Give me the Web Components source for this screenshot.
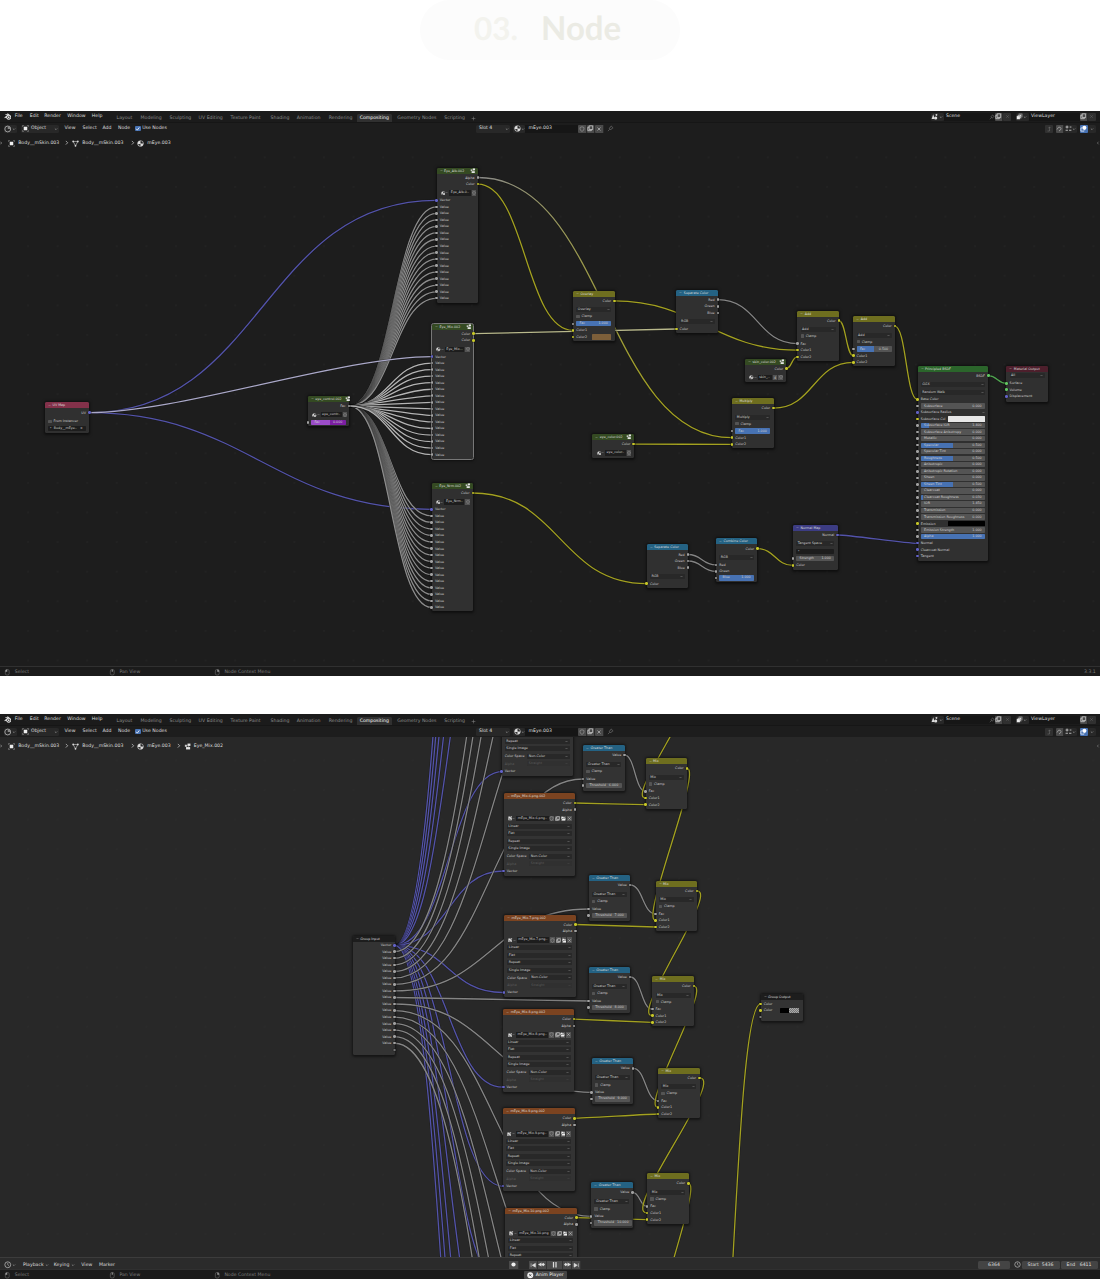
<!DOCTYPE html>
<html lang="en">
<head>
<meta charset="utf-8">
<title>03. Node</title>
<style>
html,body{margin:0;padding:0;background:#fff}
body{font-family:"DejaVu Sans",sans-serif;text-rendering:geometricPrecision;width:1100px;height:1279px;overflow:hidden}
</style>
</head>
<body>
<node-page></node-page>
<script>
const define = (name, css, render) => customElements.define(name, class extends HTMLElement {
  constructor(){ super(); this.attachShadow({mode:'open'}); }
  connectedCallback(){ this.shadowRoot.innerHTML = `<style>*{box-sizing:border-box}${css}</style>` + render(this); }
});

/* ---------- icons ---------- */
const ICONS = {
  blender:'<path d="M.6 7 5.200 3H2.200V2H6L5 1 6 .4 11 4.300Q12.800 6.200 11.400 8.600 9.800 10.800 7.300 10.800 4.500 10.600 3.600 8V7L1.400 8.400Z" fill="#e2e2e2"/><circle cx="7.600" cy="6.700" r="2.300" fill="#1d1d1d"/><circle cx="7.600" cy="6.700" r="1.400" fill="#e2e2e2"/>',
  editor:'<circle cx="5.600" cy="6" r="4.400" fill="none" stroke="#bbb" stroke-width="1.200"/><path d="M5.600 1.600A4.400 4.400 0 0 1 10 6L5.600 6Z" fill="#888"/>',
  object:'<rect x="3" y="3" width="6" height="6" fill="#eee"/><path d="M1 3V1H3M9 1H11V3M11 9V11H9M3 11H1V9" fill="none" stroke="#aaa"/>',
  mesh:'<path d="M2 2.500H10L6 10Z" fill="none" stroke="#ccc" stroke-width="1.100"/><circle cx="2" cy="2.500" r="1.500" fill="#ddd"/><circle cx="10" cy="2.500" r="1.500" fill="#ddd"/><circle cx="6" cy="10" r="1.500" fill="#ddd"/>',
  ball:'<circle cx="6" cy="6" r="4.900" fill="#ddd"/><path d="M6 1.100A4.900 4.900 0 0 1 10.900 6L6 6Z" fill="#222"/><path d="M1.500 7A4.900 4.900 0 0 0 6 10.900V7Z" fill="#333"/><circle cx="6" cy="6" r="4.900" fill="none" stroke="#ddd" stroke-width=".8"/>',
  tree:'<rect x="6" y="1" width="5" height="4" fill="#e5e5e5"/><rect x="1.500" y="3" width="3.500" height="3.500" fill="#ccc"/><rect x="3.500" y="7" width="7" height="4" fill="#e5e5e5"/><path d="M8 5V7M5 5H6" stroke="#ccc"/>',
  image:'<path d="M2 1H7V4H10V11H1V1Z" fill="#ddd"/><path d="M2.500 9 4.500 6 6 8 7 7 8.500 9Z" fill="#333"/><rect x="8" y="1" width="3" height="2" fill="#ddd"/>',
  shield:'<path d="M2 3 6 1.500 10 3V6Q10 9 6 10.800 2 9 2 6Z" fill="none" stroke="#aaa" stroke-width="1.100"/>',
  copy:'<path d="M4 1.500H10.500V8.500H4Z" fill="none" stroke="#ddd" stroke-width="1.300"/><path d="M4 4H1.500V10.500H8V8.500" fill="none" stroke="#ddd" stroke-width="1.300"/>',
  folder:'<path d="M1 2H5L6 3.500H10V5H3L1 9.500ZM3.500 5.800H11.500L9.500 10.500H1.500Z" fill="#eee"/>',
  close:'<path d="M3 3 9 9M9 3 3 9" stroke="#ccc" stroke-width="1.200"/>',
  closedim:'<path d="M3 3 9 9M9 3 3 9" stroke="#666" stroke-width="1.200"/>',
  pin:'<path d="M7 1.500 10.500 5 8 6 6.500 8.500 3.500 5.500 6 4ZM5 7 1.500 10.500" fill="none" stroke="#777" stroke-width="1"/>',
  scene:'<path d="M1 9.500 3.500 2 6 9.500Z" fill="#ddd"/><circle cx="7.500" cy="8" r="2.500" fill="#ddd"/><path d="M7 2 10 1V4L8 5Z" fill="#ccc"/>',
  layer:'<rect x="4.500" y="1" width="6.500" height="6.500" fill="#999"/><rect x="2.500" y="3" width="6.500" height="6.500" fill="#ddd" stroke="#222" stroke-width=".6"/><rect x="1" y="5" width="6" height="6" fill="#eee" stroke="#222" stroke-width=".6"/>',
  up:'<path d="M3 10H7V2M4.500 4 7 2 9 4" fill="none" stroke="#777"/>',
  magnet:'<path d="M2 7 5 2.500Q9 1 10 5 10 8 6 10" fill="none" stroke="#aaa" stroke-width="1.600"/>',
  snap:'<path d="M1 3.500H6M3.500 1V6M8 3.500H11M1 9H5M7 9H11" stroke="#ccc" stroke-width="1.500"/>',
  overlay:'<circle cx="7.500" cy="4.800" r="3.600" fill="#fff"/><path d="M3.500 5H1.500V10.500H7V9.500" fill="none" stroke="#fff" stroke-width="1.200"/>',
  mouseL:'<rect x="2.500" y="1" width="7" height="10" rx="2.500" fill="none" stroke="#777"/><path d="M2.500 5V3.500Q3 1 6 1V5Z" fill="#999"/>',
  mouseM:'<rect x="2.500" y="1" width="7" height="10" rx="2.500" fill="none" stroke="#777"/><rect x="5" y="1" width="2" height="4" fill="#999"/>',
  mouseR:'<rect x="2.500" y="1" width="7" height="10" rx="2.500" fill="none" stroke="#777"/><path d="M9.500 5V3.500Q9 1 6 1V5Z" fill="#999"/>',
  clock:'<circle cx="6" cy="6" r="4.700" fill="none" stroke="#bbb" stroke-width="1.200"/><path d="M6 3V6L8 7.500" fill="none" stroke="#bbb"/>',
  rec:'<circle cx="6" cy="6" r="3.600" fill="#eee"/>',
  first:'<path d="M2 2.500V9.500M10 2.500V9.500L4 6Z" fill="#ddd" stroke="#ddd" stroke-width="1"/>',
  prev:'<path d="M6 2.500V9.500L0 6ZM12 6 9 3 6 6 9 9Z" fill="#ddd"/>',
  next:'<path d="M6 2.500V9.500L12 6ZM0 6 3 3 6 6 3 9Z" fill="#ddd"/>',
  last:'<path d="M10 2.500V9.500M2 2.500V9.500L8 6Z" fill="#ddd" stroke="#ddd" stroke-width="1"/>',
  pause:'<path d="M4 1.500V10.500M8 1.500V10.500" stroke="#ddd" stroke-width="2"/>',
  stop:'<circle cx="6" cy="6" r="5.500" fill="#eee"/><path d="M4 4 8 8M8 4 4 8" stroke="#444" stroke-width="1.500"/>',
  down:'<path d="M2.500 4.500 6 8 9.500 4.500" fill="none" stroke="#bbb" stroke-width="1.500"/>',
  right:'<path d="M4 2 8 6 4 10" fill="none" stroke="#ccc" stroke-width="1.600"/>',
  left:'<path d="M8 2 4 6 8 10" fill="none" stroke="#aaa" stroke-width="1.400"/>',
  check:'<path d="M2.500 6 5 9 9.500 3" fill="none" stroke="#fff" stroke-width="1.700"/>',
  plus:'<path d="M6 1.500V10.500M1.500 6H10.500" stroke="#888" stroke-width="1.200"/>'
};
define('bl-icon', ':host{display:inline-flex;flex:none;width:var(--s,7px);height:var(--s,7px)}svg{width:100%;height:100%;display:block}',
  el => `<svg viewBox="0 0 12 12">${ICONS[el.getAttribute('name')] || ''}</svg>`);
const ic = (n, s=7, extra='') => `<bl-icon name="${n}" style="--s:${s}px;${extra}"></bl-icon>`;
/* a bar item: its width runs to the start of the next item */
const cell = (w, html, cls='') => {
  const text = /^[A-Z][^<]*$/.test(html) ? `<span class="tx">${html}</span>` : html;
  return `<span class="c ${cls}" style="width:${w}px">${text}</span>`;
};
const BAR = `:host{display:flex;align-items:center;font:4.65px/8px "DejaVu Sans",sans-serif;color:#dedede;white-space:nowrap;position:relative;z-index:2}
.c{display:inline-flex;align-items:center;flex:none;height:8px}.g{flex:1}.tx{padding-top:var(--drop,1.2px)}
.b{background:#282828;border-radius:1.500px}.k{background:#161616}.l{background:#4a4a4a;border-radius:1px;justify-content:center;border-right:.5px solid #2a2a2a}.d{background:#303030;border-radius:1px;justify-content:center}`;

define('bl-topbar', BAR + `:host{height:12px;background:#1b1b1b;border-bottom:1px solid #161616;padding-left:.3px;--drop:1px}
.tabs{display:flex;align-items:center;margin-top:3px;color:#8c8c8c;height:8px;--drop:1.500px}.on{background:#303030;color:#fff;border-radius:1.500px 1.500px 0 0;justify-content:center}`, () =>
  cell(3.5,'')+cell(11, ic('blender',7.5))+cell(15,'File')+cell(14.5,'Edit')+cell(23,'Render')+cell(24.5,'Window')+cell(24.8,'Help') +
  `<div class="tabs">${[['Layout',24],['Modeling',29],['Sculpting',29],['UV Editing',32],['Texture Paint',40],['Shading',26.2],['Animation',32],['Rendering',28]].map(t=>cell(t[1],t[0])).join('')}
  ${cell(35,'Compositing','on')}${cell(5.5,'')}${cell(47,'Geometry Nodes')}${cell(26.5,'Scripting')}${cell(8,ic('plus',5))}</div><span class="g"></span>` +
  cell(13, ic('scene',7.5)+ic('down',4), 'b')+cell(51,'<span class="tx" style="padding-left:2px">Scene</span><span class="g"></span>'+ic('pin',6),'k')+cell(8,ic('copy',6.5),'l')+cell(8,ic('closedim',5),'d')+cell(5,'')+
  cell(13, ic('layer',7)+ic('down',4), 'b')+cell(50.5,'<span class="tx" style="padding-left:2px">ViewLayer</span>','k')+cell(8,ic('copy',6.5),'l')+cell(8.5,ic('closedim',5),'d')+cell(4,''));

define('bl-header', BAR + ':host{height:11px;background:#1d1d1d;padding-left:4px;--drop:0px}.chk{width:5.500px;height:5.500px;background:#4772b3;border-radius:1px;margin-right:1.700px;display:flex}.bl{background:#4772b3;border-radius:1px;justify-content:center}', () =>
  cell(12.5, ic('editor',8)+ic('down',4),'b')+cell(4,'')+cell(38.5, ic('object',7,'margin:0 2.500px 0 1px')+'Object<span class="g"></span>'+ic('down',4,'margin-right:1px'),'b')+cell(5.5,'')+
  cell(18,'View')+cell(20,'Select')+cell(15.5,'Add')+cell(17,'Node')+`<span class="chk">${ic('check',5.5)}</span>`+cell(40,'Use Nodes')+
  cell(293.8,'')+cell(34.5,'<span style="padding-left:3px">Slot 4</span><span class="g"></span>'+ic('down',4,'margin-right:1px'),'b')+cell(2.5,'')+
  cell(12.5,ic('ball',7,'margin-left:1px')+ic('down',4),'b')+cell(52.6,'<span style="padding-left:3px">mEye.003</span>','k')+cell(8.5,ic('shield',6),'l')+cell(8.5,ic('copy',6.5),'l')+cell(8.5,ic('close',6),'l')+cell(3,'')+ic('pin',7)+
  '<span class="g"></span>'+cell(8,ic('up',6),'d')+cell(2.5,'')+cell(8.5,ic('magnet',6),'l')+cell(13,ic('snap',7,'margin-left:1px')+ic('down',4),'b')+cell(2.5,'')+cell(8.5,ic('overlay',7),'bl')+cell(8,ic('down',4,'margin-left:2px'),'b')+cell(4,''));

define('bl-crumbs', BAR + ':host{height:10px;margin-top:4px;--drop:1.600px}', el => {
  const t = s => `<span class="tx">${s}</span>`;
  return cell(8,ic('right',4,'margin-left:-1.500px'))+cell(10.2,ic('object',7))+cell(46.3,t('Body__mSkin.003'))+cell(7.5,ic('right',5.5))+cell(10.3,ic('mesh',7))+cell(47.700,t('Body__mSkin.003'))+cell(7.3,ic('right',5.5))+cell(10,ic('ball',7))+cell(29,t('mEye.003'))+
  (el.hasAttribute('group') ? cell(7.5,ic('right',5.5))+cell(10,ic('tree',7))+t('Eye_Mix.002') : '')+'<span class="g"></span>'+ic('left',4);
});

define('bl-status', BAR + `:host{height:10px;background:#1b1b1b;color:#7b7b7b;border-top:1px solid #303030;padding:1.500px 0 0 4px;--drop:1.600px}
.job{background:#444;color:#eee;border-radius:1px;gap:2px;justify-content:center}`, el =>
  cell(10.8,ic('mouseL',6.5))+cell(94.4,'Select')+cell(10.2,ic('mouseM',6.5))+cell(95,'Pan View')+cell(10,ic('mouseR',6.5))+cell(60,'Node Context Menu')+
  (el.hasAttribute('job') ? cell(239.6,'')+cell(43,ic('stop',6.5)+'<span class="tx">Anim Player</span>','job') : '<span class="g"></span>'+cell(16,'<span class="tx">3.3.1</span>')));

define('bl-timeline', BAR + ':host{height:12px;background:#2b2b2b;border-top:1px solid #3c3c3c;padding:2.500px 0 0 4px;--drop:1.600px}.t{background:#4a4a4a;justify-content:center;border-right:.5px solid #333}.n{background:#444;border-radius:1.500px;justify-content:center}.sp{justify-content:space-between;padding:0 6px}', () => {
  const t = s => `<span class="tx">${s}</span>`;
  return cell(12,ic('clock',7.5)+ic('down',4))+cell(7,'')+cell(30.8,t('Playback&nbsp;')+ic('down',4))+cell(27.5,t('Keying&nbsp;')+ic('down',4))+cell(17.7,'View')+cell(15,'Marker')+cell(395.5,'')+
  cell(9.5,ic('rec',7),'t')+cell(10.5,'')+cell(8.5,ic('first',6.5),'t')+cell(9,ic('prev',7),'t')+cell(16.5,ic('pause',7.5),'t')+cell(9,ic('next',7),'t')+cell(8.5,ic('last',6.5),'t')+
  '<span class="g"></span>'+cell(32,t('6364'),'n')+cell(3.5,'')+cell(8,ic('clock',7))+cell(38,t('Start')+t('5436'),'n sp')+cell(1,'')+cell(37,t('End')+t('6411'),'n sp')+cell(2.5,'');
});

/* ---------- nodes ---------- */
const SOCK = {y:'#c7c729', g:'#a1a1a1', p:'#6363c7', s:'#63c763'};
const HEAD = {mix:'#6e6e1f', conv:'#246283', group:'#344a22', vec:'#3c3c83', input:'#83314a', shader:'#2b652b', out:'#4d1f2c', tex:'#7b4320', io:'#1d1d1d'};
const NODE_CSS = `:host{position:absolute;display:flex;flex-direction:column;background:#303030;border-radius:1.500px;font:3.3px/6px "DejaVu Sans",sans-serif;color:#cfcfcf;white-space:nowrap;box-shadow:0 .5px 2.500px 1px rgba(0,0,0,.5)}
:host([sel]){outline:1px solid #777}
header{flex:none;height:6px;display:flex;align-items:center;gap:1.500px;padding:0 2px 0 3px;background:var(--h);border-radius:1.500px 1.500px 0 0;color:#ddd}
.gap{flex:none;height:6px}
.r{position:relative;flex:none;height:6px;display:flex;align-items:center;padding:0 3.300px}
.r.o{justify-content:flex-end}
.dot{position:absolute;width:2.500px;height:2.500px;border-radius:50%;left:-1.250px;top:1.750px;box-shadow:0 0 0 .3px #111}.o .dot{left:auto;right:-1.250px}
.dd,.sl,.f{flex:1;height:5px;line-height:5px;display:flex;align-items:center;background:#282828;border-radius:.8px;padding:0 1.500px}
.g{flex:1}.sl{background:#545454;padding:0 3.300px;height:5.300px}.f{background:#1d1d1d}
.cb{width:3.500px;height:3.500px;background:#545454;border-radius:.6px;margin-right:1.700px}
.pk{flex:1;background:#1d1d1d;height:5.400px;line-height:5.400px;padding:0 1.500px;margin-left:1px}
.bt{background:#545454;height:5.400px;min-width:5.600px;display:flex;align-items:center;justify-content:center;border-left:.4px solid #333}
.sw{height:5.200px;border-radius:.6px}.dim{color:#5c5c5c}.dd.dim{background:#303030}.nm{justify-content:center;gap:3px}`;
const g = '<span class="g"></span>';
const dot = c => c ? `<i class="dot" style="background:${c==='n'?'#303030;border:.4px solid #777':SOCK[c]}"></i>` : '';
const ROW = {
  in:  ([t,c]) => dot(c)+t,
  out: ([t,c]) => t+dot(c),
  dd:  ([t]) => `<span class="dd">${t}${g}${ic('down',3)}</span>`,
  ddin:([t,c]) => dot(c)+`<span class="dd" style="background:none;padding:0">${t}${g}${ic('down',3)}</span>`,
  cb:  ([t]) => `<span class="cb"></span>${t}`,
  sl:  ([t,v,f,c,col='#4772b3',base='#545454']) => dot(c)+`<span class="sl" style="background:linear-gradient(90deg,${col} ${f*100}%,${base} ${f*100}%)">${t}${g}${v}</span>`,
  num: ([t,v,c]) => dot(c)+`<span class="sl">${t}${g}${v}</span>`,
  thr: ([t,v,c]) => dot(c)+`<span class="sl nm"><span>${t}</span><span>${v}</span></span>`,
  pick:([t,n]) => ic('ball',4.5,'margin-left:1px')+ic('down',3)+`<span class="pk">${t}</span>`+(n?`<span class="bt">${n}</span>`:'')+`<span class="bt">${ic('shield',4)}</span>`,
  img: ([t]) => ic('image',4.5,'margin-left:1px')+ic('down',3)+`<span class="pk">${t}</span>`+['shield','copy','folder','close'].map(i=>`<span class="bt">${ic(i,5)}</span>`).join(''),
  sw:  ([t,c,col,w]) => dot(c)+t+g+`<span class="sw" style="background:${col};width:${w}px"></span>`,
  lab: ([t,v,dim]) => `<span class="${dim||''}" style="width:22.500px">${t}</span><span class="dd ${dim||''}">${v}${g}${ic('down',3,dim?'opacity:.3':'')}</span>`,
  field:([t]) => `<span class="f">${t}</span>`,
  none: ([c]) => dot(c)
};
define('bl-node', NODE_CSS, el => {
  const d = el.data, lo = d.oy > 700 ? 736 : 0, hi = d.oy > 700 ? 1258 : 9999; let end = 6;
  el.style.cssText = `left:${d.x}px;top:${d.y-d.oy}px;width:${d.w}px;height:${d.h}px;--h:${HEAD[d.kind]};${d.oy>700?'background:#333':''}`;
  if (d.sel) el.setAttribute('sel','');
  /* rows that fall outside the visible part of the editor are not built */
  const rows = d.rows.filter(r => d.y+r[1] > lo && d.y+r[1] < hi);
  const head = d.y < lo ? '<div class="gap"></div>' : `<header>${ic('down',3)}<span>${d.title}</span>${g}${d.kind==='group'?ic('tree',5.5):''}</header>`;
  return head + rows.map(([k,c,...a]) => {
    const m = c - 3 - end; end = c + 3;
    return `<div class="r ${k==='out'?'o':''}" style="margin-top:${m.toFixed(2)}px">${ROW[k](a)}</div>`;
  }).join('');
});
const N = (kind,title,x,y,w,h,rows,sel) => ({kind,title,x,y,w,h,rows,sel});
const vals = (start,k='in') => Array.from({length:15},(_,i)=>[k,start+6.54*i,'Value','g']);
const mixNode = (t,x,y,fac,c2) => N('mix',t,x,y,41.5,50.4,[['out',10.2,'Color','y'],['dd',19.3,t],['cb',25.7,'Clamp'],
  fac!=null?['sl',33.1,'Fac',fac.toFixed(3),fac,'g']:['in',33.1,'Fac','g'],['in',39.7,'Color1','y'],c2?['sw',46.3,'Color2','y',c2,19.5]:['in',46.3,'Color2','y']]);
const tex = (n,x,y,w=71.5) => N('tex',`mEye_Mix.${n}.png.002`,x,y,w,82.7,[['out',10,'Color','y'],['out',16.7,'Alpha','g'],['img',25.7,n>9?`mEye_Mix.${n}.png`:`mEye_Mix.${n}.png..`],['dd',33.3,'Linear'],['dd',40.7,'Flat'],['dd',48.2,'Repeat'],['dd',55.6,'Single Image'],['lab',63.2,'Color Space','Non-Color'],['lab',70.6,'Alpha','Straight','dim'],['in',78,'Vector','p']]);
const gt = (v,x,y) => N('conv','Greater Than',x,y,41.5,45.7,[['out',10,'Value','g'],['dd',19.2,'Greater Than'],['cb',26.5,'Clamp'],['in',34,'Value','g'],['thr',40.7,'Threshold',v,'g']]);

const P = [['in','Base Color','y'],['num','Subsurface','0.000','g'],['ddin','Subsurface Radius','p'],['sw','Subsurface Col','y','#e7e7e7',37],['sl','Subsurface IOR','1.400',.13,'g'],['num','Subsurface Anisotropy','0.000','g'],['num','Metallic','0.000','g'],['sl','Specular','0.500',.5,'g'],['num','Specular Tint','0.000','g'],['sl','Roughness','0.500',.5,'g'],['num','Anisotropic','0.000','g'],['num','Anisotropic Rotation','0.000','g'],['num','Sheen','0.000','g'],['sl','Sheen Tint','0.500',.5,'g'],['num','Clearcoat','0.000','g'],['sl','Clearcoat Roughness','0.030',.03,'g'],['num','IOR','1.450','g'],['num','Transmission','0.000','g'],['num','Transmission Roughness','0.000','g'],['sw','Emission','y','#000',37],['num','Emission Strength','1.000','g'],['sl','Alpha','1.000',1,'g'],['in','Normal','p'],['in','Clearcoat Normal','p'],['in','Tangent','p']]
  .map(([k,...a],i)=>[k,34+6.54*i,...a]);

const NODES1 = [
  N('input','UV Map',45,402.3,44.3,31,[['out',10.4,'UV','p'],['cb',19.2,'From Instancer'],['field',26.7,'•&nbsp;&nbsp;Body__mEye..&nbsp;&nbsp;&nbsp;×']]),
  N('group','eye_control.002',307.8,395.6,41.2,30.8,[['out',10.3,'Fac','g'],['pick',19.2,'eye_contr..'],['sl',26.7,'Fac','0.000',.53,'g','#9b4cc8','#7c1fa3']]),
  N('group','Eye_Alb.002',436.5,167.5,41.3,135.3,[['out',10,'Alpha','g'],['out',16.6,'Color','y'],['pick',25.5,'Eye_Alb.0..'],['in',32.8,'Vector','p'],...vals(39.3)]),
  N('group','Eye_Mix.002',432,323.5,41.3,135.5,[['out',10.2,'Color','y'],['out',16.8,'Color','y'],['pick',25.8,'Eye_Mix...'],['in',33.1,'Vector','p'],...vals(39.6)],1),
  N('group','Eye_Nrm.002',431.7,483,41.1,128.4,[['out',10,'Color','y'],['pick',19,'Eye_Nrm..'],['in',26.3,'Vector','p'],...vals(32.9)]),
  mixNode('Overlay',573,290.7,1,'#7d5f3a'),
  N('conv','Separate Color',676.3,289.7,41.6,43.6,[['out',10,'Red','g'],['out',16.6,'Green','g'],['out',23.2,'Blue','g'],['dd',32,'RGB'],['in',39.3,'Color','y']]),
  N('group','skin_color.002',745,358.5,41.3,23.3,[['out',10,'Color','y'],['pick',19,'skin_..','4']]),
  mixNode('Multiply',732,398,1),
  N('group','eye_color.002',592.3,434,41.3,23.5,[['out',10.2,'Color','y'],['pick',19,'eye_color..']]),
  mixNode('Add',797.3,310.5,null), mixNode('Add',853.3,316,.5),
  N('shader','Principled BSDF',917.5,365.5,70.8,195.8,[['out',10.2,'BSDF','s'],['dd',19.2,'GGX'],['dd',26.7,'Random Walk'],...P]),
  N('out','Material Output',1006.3,365.5,41.5,36,[['dd',10.2,'All'],['in',17.8,'Surface','s'],['in',24.2,'Volume','s'],['in',30.8,'Displacement','p']]),
  N('conv','Separate Color',646.7,544,41.3,44,[['out',10.5,'Red','g'],['out',17,'Green','g'],['out',23.6,'Blue','g'],['dd',32.3,'RGB'],['in',39.7,'Color','y']]),
  N('conv','Combine Color',716,538.3,41.3,43.7,[['out',10.4,'Color','y'],['dd',19,'RGB'],['in',26.6,'Red','g'],['in',33,'Green','g'],['sl',39.7,'Blue','1.000',1,'g']]),
  N('vec','Normal Map',793,524.7,44.5,45,[['out',10.3,'Normal','p'],['dd',19.3,'Tangent Space'],['field',26.7,'•'],['num',34,'Strength','1.000','g'],['in',40.7,'Color','y']])
];
const Y='#a3a120', G='#858585', V='#5353aa';
const fan = (x,y,col) => Array.from({length:15},(_,i)=>[349,405.9,x,y+6.54*i,col]);
const W1 = [
  [89,412.7,436.5,200.3,V],[89,412.7,431.7,509.3,V],
  ...fan(436.5,206.8,'#8c8c8c'), ...fan(431.7,515.9,'#8c8c8c'), ...fan(431.7,363.1,'#b4b4b4'),
  [89,412.7,432,356.6,'#aaa8c8'],
  [477.8,177.5,732,437.7,'grad'],[477.8,184.1,573,330.4,Y],[473.3,333.7,676.3,329,'#b9b98c'],[614.5,300.9,797.3,350.2,Y],[717.9,299.7,797.3,343.6,G],
  [786.3,368.5,797.3,356.8,Y],[773.5,408.2,853.3,362.3,Y],[838.8,320.7,853.3,355.7,Y],[894.8,326.2,917.5,399.5,Y],[988.3,375.7,1006.3,383.3,'#4fa34f'],
  [633.6,444.2,732,444.3,Y],[472.8,493,646.7,583.7,Y],[688,554.5,716,564.9,G],[688,561,716,571.3,G],[757.3,548.7,793,565.4,Y],[837.5,535,917.5,543.4,V]
];
const MX = [[645.5,758.3],[655.5,880.7],[652.3,976],[658,1067.7],[647,1173.3]];
const GT = [[583,745],[588.7,875],[588.7,967],[591.7,1058.3],[591.2,1182.3]];
const TX = [[503.5,793],[504,914.5],[503.3,1009.2,70.8],[503,1108.3],[505,1207.7]];
const NODES2 = [
  tex(5,501.5,693.3), ...TX.map(([x,y,w],i)=>tex(6+i,x,y,w)), ...GT.map(([x,y],i)=>gt((6+i)+'.000',x,y)), ...MX.map(([x,y])=>mixNode('Mix',x,y,null)),
  N('io','Group Input',352.7,935.5,41.9,119,[['out',9.8,'Vector','p'],...vals(16.2,'out'),['out',114.7,'','n']]),
  N('io','Group Output',760.5,993.5,42,27.5,[['in',10.3,'Color','y'],['sw',16.9,'Color','y','linear-gradient(90deg,#000 50%,transparent 50%),repeating-conic-gradient(#777 0 25%,#aaa 0 50%) 0 0/2px 2px',19],['none',23.5,'n']])
];
const W2 = [
  ...[60,190,310,430,550,771.3,871,992.5,1087.2,1186.3,1286,1400,1530,1670,1820].map(y=>[394.6,945.3,503,y,V]),
  ...[[583,180],[583,300],[583,420],[583,540],[583,660],[583,779],[588.7,909],[588.7,1001],[591.7,1092.3],[591.2,1216.3],[595,1330],[595,1440],[595,1550],[595,1670],[595,1790]].map(([x,y],i)=>[394.6,951.7+6.54*i,x,y,G]),
  ...MX.map(([x,y],i)=>[GT[i][0]+41.5,GT[i][1]+10,x,y+33.1,G]),
  ...MX.map(([x,y],i)=>[TX[i][0]+(TX[i][2]||71.5),TX[i][1]+10,x,y+46.3,Y]),
  [685.5,692,645.5,798,Y],
  ...MX.map(([x,y],i)=>[x+41.5,y+10.2,...(MX[i+1]?[MX[i+1][0],MX[i+1][1]+39.7]:[660,1330]),Y]),
  [706,1500,760.5,1004,Y]
];

define('bl-wires', ':host{display:block;position:absolute;inset:0}svg{display:block;width:100%;height:100%}path{fill:none}', el => {
  const {wires,oy,h} = el;
  const p = wires.map(([a,b,c,d,col]) => {
    const k = Math.abs(c-a)*.5*Math.min(1,Math.abs((d-b)/(c-a))*3.25);
    const path = `M${a} ${b}C${a+k} ${b} ${c-k} ${d} ${c} ${d}`;
    return `<path d="${path}" stroke="#111" stroke-opacity=".5" stroke-width="2.300"/><path d="${path}" stroke="${col==='grad'?'url(#gy)':col}" stroke-width="1.300"/>`;
  }).join('');
  return `<svg viewBox="0 ${oy} 1100 ${h}"><defs><linearGradient id="gy" gradientUnits="userSpaceOnUse" x1="478" y1="0" x2="660" y2="0"><stop offset="0" stop-color="#8a8a8a"/><stop offset="1" stop-color="${Y}"/></linearGradient></defs>${p}</svg>`;
});

customElements.define('bl-graph', class extends HTMLElement {
  connectedCallback(){
    const r = this.attachShadow({mode:'open'}), second = this.getAttribute('tree')==='group', oy = second?737:134, h = second?520:532;
    r.innerHTML = `<style>:host{display:block;flex:1;position:relative;overflow:hidden;background-color:${second?'#282828':'#1d1d1d'};background-image:radial-gradient(circle,${second?'#2c2c2c':'#252525'} .5px,transparent 1px);background-size:29.6px 29.6px;background-position:13.200px 8.600px}</style><slot></slot>`;
    const w = document.createElement('bl-wires'); Object.assign(w,{wires:second?W2:W1,oy,h}); r.append(w);
    for (const d of second?NODES2:NODES1){ const n = document.createElement('bl-node'); n.data = {...d,oy}; r.append(n); }
  }
});
define('bl-window', ':host{display:flex;flex-direction:column;height:565px;background:#1d1d1d;overflow:hidden}', () => '<slot></slot>');
define('page-title', `:host{display:flex;justify-content:center;height:111px}
div{width:260px;height:60px;border-radius:30px;background:#fcfcfc;display:flex;padding-left:54px;font:700 33px/57px Lato,sans-serif;color:#ebebe4}span{width:67px;flex:none;color:#f3f3ee;font-size:31.500px}`,
  () => '<div><span>03.</span>Node</div>');
define('node-page', ':host{display:flex;flex-direction:column}.two{margin-top:38px}', () => `<page-title></page-title>
<bl-window><bl-topbar></bl-topbar><bl-header></bl-header><bl-graph tree="material"><bl-crumbs></bl-crumbs></bl-graph><bl-status></bl-status></bl-window>
<bl-window class="two"><bl-topbar></bl-topbar><bl-header></bl-header><bl-graph tree="group"><bl-crumbs group></bl-crumbs></bl-graph><bl-timeline></bl-timeline><bl-status job></bl-status></bl-window>`);
</script>
</body>
</html>
